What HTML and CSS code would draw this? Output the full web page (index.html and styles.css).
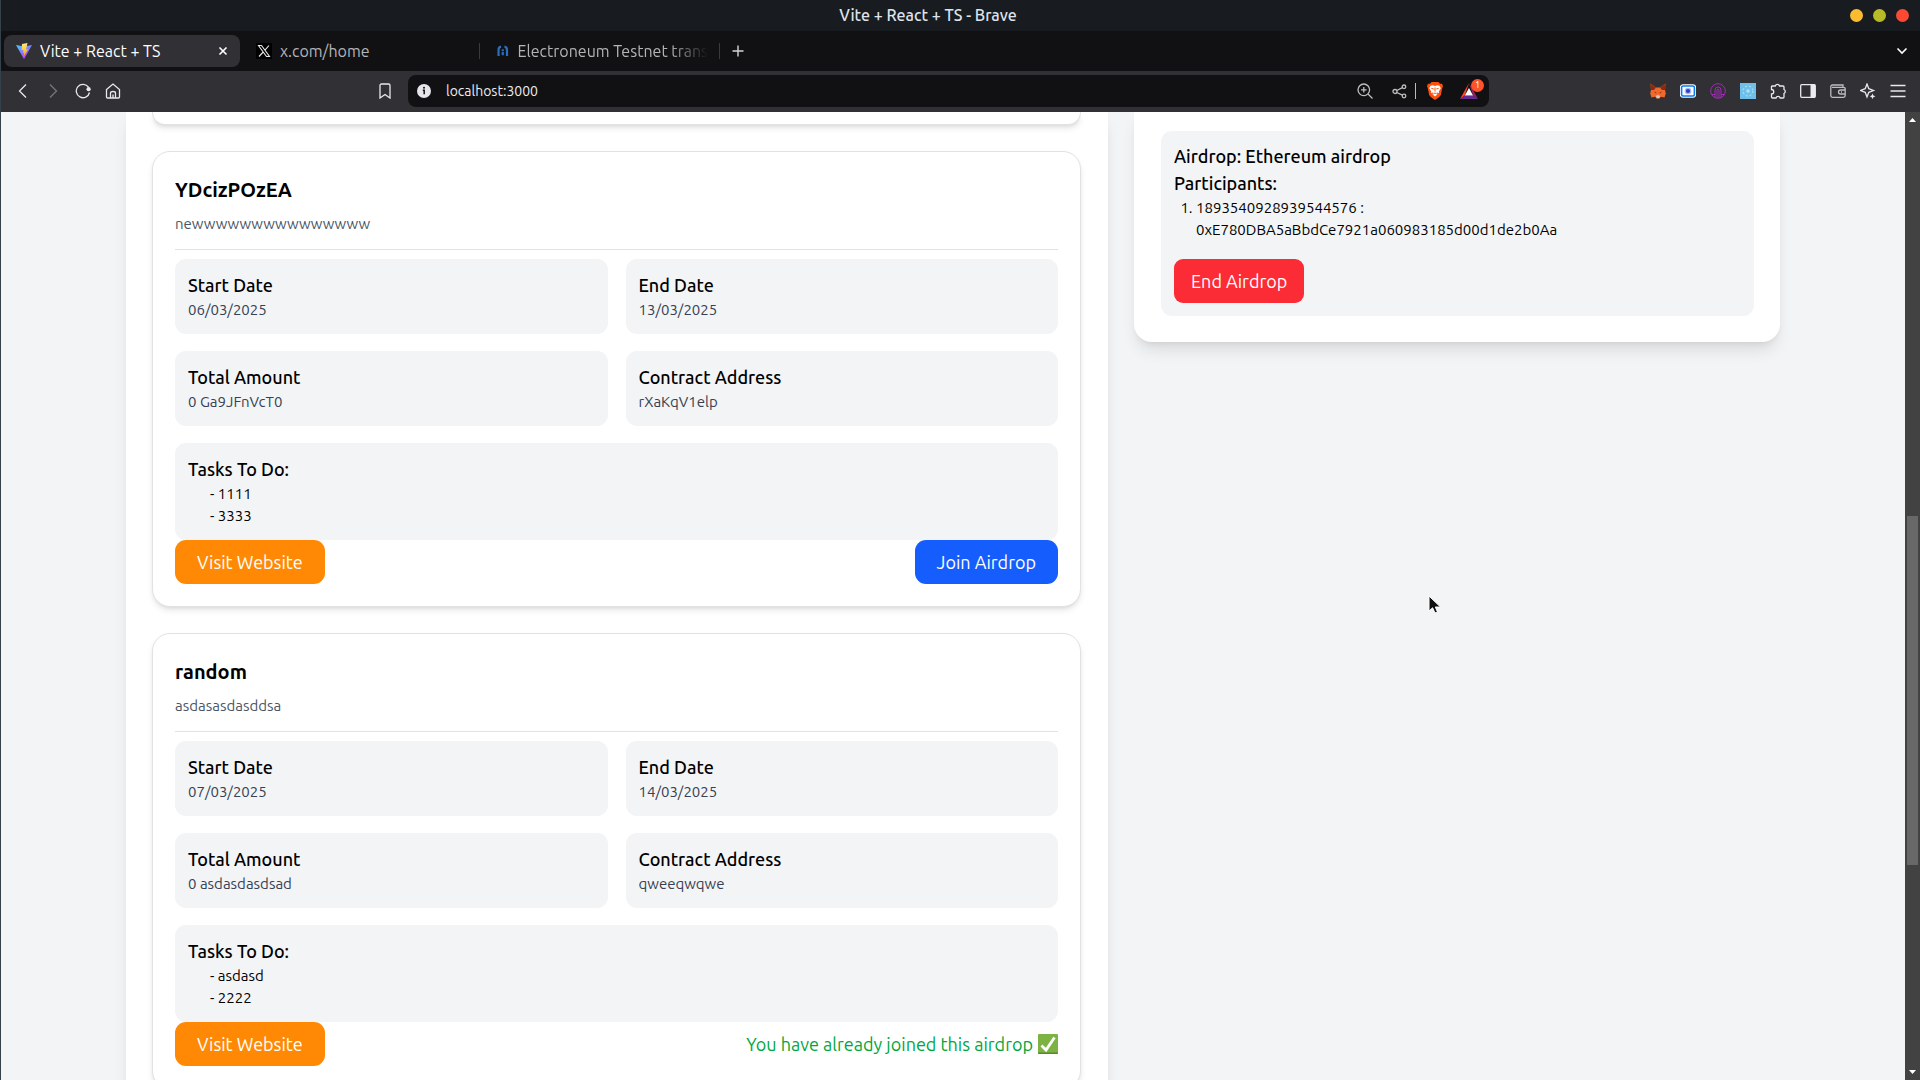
FILE: index.html
```
<!DOCTYPE html>
<html lang="en">
<head>
  <meta charset="UTF-8" />
  <meta name="viewport" content="width=device-width, initial-scale=1.0"/>
  <title>Vite + React + TS</title>
  <link rel="stylesheet" href="styles.css">
</head>
<body>
  <header class="titlebar">
    <span class="window-title">Vite + React + TS - Brave</span>
    <div class="window-buttons">
      <button class="dot yellow" aria-label="Minimize"></button>
      <button class="dot green" aria-label="Maximize"></button>
      <button class="dot red" aria-label="Close"></button>
    </div>
  </header>

  <nav class="tabs">
    <div class="tab active">
      <svg width="16" height="16" viewBox="0 0 16 16">
        <defs>
          <linearGradient id="viteBlue" x1="0" y1="0" x2="0.6" y2="1"><stop offset="0" stop-color="#41d1ff"/><stop offset="1" stop-color="#bd34fe"/></linearGradient>
          <linearGradient id="viteBolt" x1="0" y1="0" x2="0" y2="1"><stop offset="0" stop-color="#ffea83"/><stop offset="1" stop-color="#ffa800"/></linearGradient>
        </defs>
        <path d="M0 2 8 3.400 16 2 8.300 15.700Q8 16 7.700 15.700Z" fill="url(#viteBlue)"/>
        <path d="M11.500 0 6 1.100 5.500 7.200 7.500 6.900 7 10 8.300 9.600 7.600 13.500 12 6.200 10 6.500Z" fill="url(#viteBolt)"/>
      </svg>
      <span class="tab-text">Vite + React + TS</span>
      <button class="close-btn" aria-label="Close tab">
        <svg width="10" height="10" viewBox="0 0 10 10" stroke="#fff" stroke-width="1.600"><path d="M1.500 1.500 8.500 8.500M8.500 1.500 1.500 8.500"/></svg>
      </button>
    </div>
    <div class="tab">
      <svg width="16" height="16" viewBox="0 0 16 16">
        <path d="M0 0H16V16H0Z" fill="#000"/>
        <path d="M2.500 2.500H5.500L13.500 13.500H10.500ZM13 2.500 8.700 7.400M7.200 9 3 13.500" fill="none" stroke="#e8e8e8" stroke-width="1.100"/>
      </svg>
      <span class="tab-text">x.com/home</span>
    </div>
    <div class="tab">
      <svg width="16" height="16" viewBox="0 0 16 16" fill="none" stroke="#2a6fbd" stroke-width="2.600">
        <path d="M6 2.800Q2.800 3.200 3 7V14M10 2.800Q13.200 3.200 13 7V14M8 6V8M8 9V13"/>
      </svg>
      <span class="tab-text fade">Electroneum Testnet trans</span>
    </div>
    <button class="new-tab" aria-label="New tab">
      <svg width="12" height="12" viewBox="0 0 12 12" stroke="#d5d5d8" stroke-width="1.400"><path d="M6 0.500V11.500M0.500 6H11.500"/></svg>
    </button>
    <button class="tool-btn tab-list" aria-label="Search tabs">
      <svg width="12" height="8" viewBox="0 0 12 8" fill="none" stroke="#fff" stroke-width="1.600"><path d="M1.500 1.500 6 6 10.500 1.500"/></svg>
    </button>
  </nav>

  <div class="toolbar">
    <button class="tool-btn" aria-label="Back"><svg viewBox="0 0 16 16"><path d="M11 1.500 4.500 8 11 14.500"/></svg></button>
    <button class="tool-btn dim" aria-label="Forward"><svg viewBox="0 0 16 16"><path d="M5 1.500 11.500 8 5 14.500"/></svg></button>
    <button class="tool-btn" aria-label="Reload"><svg viewBox="0 0 16 16"><path d="M14.500 9.500A6.700 6.700 0 1 1 13.500 4.200"/><circle cx="13.600" cy="6.200" r="2.100" fill="#e9e9ec" stroke="none"/></svg></button>
    <button class="tool-btn" aria-label="Home"><svg viewBox="0 0 16 16"><path d="M1.500 6.500 8 1 14.500 6.500V14Q14.500 15 13.500 15H2.500Q1.500 15 1.500 14ZM5.500 15V10Q5.500 8.500 8 8.500T10.500 10V15M8 11.500V15"/></svg></button>
    <button class="tool-btn bookmark" aria-label="Bookmark"><svg viewBox="0 0 16 16"><path d="M3 2.500Q3 1 4.500 1H11.500Q13 1 13 2.500V15L8 11.500 3 15Z"/></svg></button>

    <div class="url-bar">
      <svg width="14" height="14" viewBox="0 0 14 14"><circle cx="7" cy="7" r="7" fill="#e6e6ea"/><circle cx="7" cy="3.800" r="1" fill="#111"/><path d="M5.800 6.200H7.200V10.300" fill="none" stroke="#111" stroke-width="1.500"/></svg>
      <input class="url-input" type="text" value="localhost:3000" aria-label="Address">
      <button class="tool-btn light" aria-label="Zoom"><svg viewBox="0 0 16 16"><circle cx="6.800" cy="6.800" r="5.800"/><path d="M11 11 15.500 15.500M6.800 4V9.600M4 6.800H9.600"/></svg></button>
      <button class="tool-btn light share" aria-label="Share"><svg viewBox="0 0 16 16"><circle cx="4" cy="8.500" r="2"/><circle cx="13" cy="3.800" r="1.800"/><circle cx="13" cy="13" r="1.800"/><path d="M5.800 7.500 11.400 4.700M5.800 9.500 11.400 12.200"/></svg></button>
      <button class="tool-btn shields" aria-label="Brave Shields">
        <svg class="brave" viewBox="0 0 16 18"><path d="M4.500 0H11.500L13 1.800 15 1.700 16 4 15.300 6 13.800 13Q13 15 8 18 3 15 2.200 13L0.700 6 0 4 1 1.700 3 1.800Z" fill="#ff4e0a" stroke="none"/><path d="M3.500 3.800 5.800 3.300 8 4 10.200 3.300 12.500 3.800 13.800 6.200 11.800 9.500 12 11.200 9.600 10.200 10.500 12.300 8 14.500 5.500 12.300 6.400 10.200 4 11.200 4.200 9.500 2.200 6.200Z" fill="#fff" stroke="none"/><path d="M4.300 6.300 6.700 7M11.700 6.300 9.300 7M8 5.500V9.500M6.300 12 8 11 9.700 12" stroke="#ff4e0a" stroke-width="1"/></svg>
      </button>
      <button class="tool-btn rewards" aria-label="Brave Rewards">
        <svg class="bat" viewBox="0 0 18 16"><path d="M9 0 4.800 12.500 0 16Z" fill="#ff4724" stroke="none"/><path d="M9 0 18 16 13 12.500Z" fill="#9e1f63" stroke="none"/><path d="M0 16 4.800 12.500H13L18 16Z" fill="#662d91" stroke="none"/><path d="M9 5 13 12.500H4.800Z" fill="#fff" stroke="none"/></svg>
        <span class="badge">1</span>
      </button>
    </div>

    <button class="tool-btn" aria-label="MetaMask"><svg viewBox="0 0 16 16"><g stroke="none"><path d="M0.500 0.500 6 4.500H10L15.500 0.500 15 7 15.800 10.500 14.500 14.500 11 13.700 9.300 15.500H6.700L5 13.700 1.500 14.500 0.200 10.500 1 7Z" fill="#f0692c"/><path d="M0.500 0.500 6 4.500 4 7 1 7ZM15.500 0.500 10 4.500 12 7 15 7Z" fill="#8a2b0e"/><path d="M4 8.500 6.500 9.700 6 10.500ZM12 8.500 9.500 9.700 10 10.500Z" fill="#5c1d10"/><path d="M6 13 7 12.200H9L10 13 9.300 15.200H6.700Z" fill="#d8c7c0"/></g></svg></button>
    <button class="tool-btn" aria-label="Recorder"><svg viewBox="0 0 16 16"><rect x="0.500" y="2" width="15" height="12" rx="2.500" fill="#fff" stroke="#fff"/><rect x="1.600" y="3" width="12.800" height="10" rx="1.500" stroke="#087bf4" stroke-width="1.600"/><circle cx="8" cy="8" r="2.700" fill="#273fc0" stroke="#aab9f4"/></svg></button>
    <button class="tool-btn" aria-label="Wallet extension"><svg viewBox="0 0 16 16"><g stroke="#a02bb5" stroke-width="1"><circle cx="8" cy="8" r="7.300"/><path d="M5 15V7Q5 4 8 4T11 7V15M7 15V7Q7 6 8 6T9 7V15M1.500 11.500H5M11 11.500H14.500"/></g></svg></button>
    <button class="tool-btn" aria-label="Extension"><svg viewBox="0 0 16 16"><path d="M0 0H16V16H0Z" fill="#70bfea" stroke="none"/><circle cx="8" cy="8" r="5" stroke="#b4ebf2" stroke-width="1" stroke-dasharray="2 2"/><circle cx="8" cy="8" r="1.800" fill="#a9e4ef" stroke="none"/></svg></button>
    <button class="tool-btn" aria-label="Extensions"><svg viewBox="0 0 16 16"><path d="M2 3H5.300A2.200 2.200 0 0 1 9.500 3H13Q14 3 14 4V6.500A2.200 2.200 0 0 1 14 10.500V14Q14 15 13 15H10.200A2.200 2.200 0 0 0 6 15H2.500Q1.500 15 1.500 14V11A2.200 2.200 0 0 0 1.500 6.500V3.500Z"/></svg></button>
    <button class="tool-btn" aria-label="Sidebar"><svg viewBox="0 0 16 16"><rect x="0.700" y="1.700" width="14.600" height="12.600" rx="1"/><path d="M10.500 1.500H15V14.500H10.500Z" fill="#ececef" stroke="none"/></svg></button>
    <button class="tool-btn light" aria-label="Wallet"><svg viewBox="0 0 16 16"><path d="M13 4V2H2.500Q0.800 2 0.800 3.500V12.500Q0.800 14.300 2.500 14.300H13.500Q15.200 14.300 15.200 12.500V6Q15.200 4.300 13.500 4.300H2M15 7H10.500Q8.500 7 8.500 9T10.500 11H15M11 9H12"/></svg></button>
    <button class="tool-btn" aria-label="Leo AI"><svg viewBox="0 0 16 16"><path d="M7 1 8.800 5.700 13.500 7.500 8.800 9.300 7 14 5.200 9.300 0.500 7.500 5.200 5.700Z"/><path d="M12.500 10.500 13.400 12.400 15.500 13.300 13.400 14.200 12.500 16 11.600 14.200 9.700 13.300 11.600 12.400Z" fill="#e9e9ec" stroke="none"/></svg></button>
    <button class="tool-btn" aria-label="Menu"><svg viewBox="0 0 16 16"><path d="M0.500 2.500H15.500M0.500 8H15.500M0.500 13.500H15.500"/></svg></button>
  </div>

  <div class="viewport">
    <main class="page">
      <div class="container">
        <section class="panel airdrops">
          <div class="card-end"></div>

          <article class="card">
            <h2>YDcizPOzEA</h2>
            <p class="description">newwwwwwwwwwwwwww</p>
            <hr>
            <div class="info-grid">
              <div class="info"><h3>Start Date</h3><p>06/03/2025</p></div>
              <div class="info"><h3>End Date</h3><p>13/03/2025</p></div>
              <div class="info"><h3>Total Amount</h3><p>0 Ga9JFnVcT0</p></div>
              <div class="info"><h3>Contract Address</h3><p>rXaKqV1elp</p></div>
              <div class="info tasks">
                <h3>Tasks To Do:</h3>
                <ul>
                  <li>- 1111</li>
                  <li>- 3333</li>
                </ul>
              </div>
            </div>
            <div class="actions">
              <button class="btn visit-btn">Visit Website</button>
              <button class="btn join-btn">Join Airdrop</button>
            </div>
          </article>

          <article class="card">
            <h2>random</h2>
            <p class="description">asdasasdasddsa</p>
            <hr>
            <div class="info-grid">
              <div class="info"><h3>Start Date</h3><p>07/03/2025</p></div>
              <div class="info"><h3>End Date</h3><p>14/03/2025</p></div>
              <div class="info"><h3>Total Amount</h3><p>0 asdasdasdsad</p></div>
              <div class="info"><h3>Contract Address</h3><p>qweeqwqwe</p></div>
              <div class="info tasks">
                <h3>Tasks To Do:</h3>
                <ul>
                  <li>- asdasd</li>
                  <li>- 2222</li>
                </ul>
              </div>
            </div>
            <div class="actions">
              <button class="btn visit-btn">Visit Website</button>
              <p class="joined">You have already joined this airdrop
                <svg width="20" height="20" viewBox="0 0 20 20"><rect width="20" height="20" rx="1" fill="#7cb342"/><path d="M0 18.500H20V19Q20 20 19 20H1Q0 20 0 19Z" fill="#558b2f"/><path d="M3.500 11.500 8 16 16.500 3.500" fill="none" stroke="#fff" stroke-width="2.800"/></svg>
              </p>
            </div>
          </article>
        </section>

        <aside class="panel manage">
          <div class="info">
            <h3>Airdrop: Ethereum airdrop</h3>
            <h3>Participants:</h3>
            <ol>
              <li>1893540928939544576 :<br>0xE780DBA5aBbdCe7921a060983185d00d1de2b0Aa</li>
            </ol>
            <button class="btn end-btn">End Airdrop</button>
          </div>
        </aside>
      </div>
    </main>

    <div class="scrollbar">
      <svg width="15" height="17" viewBox="0 0 15 17"><path d="M4 10H11L7.500 6Z" fill="#fff"/></svg>
      <div class="track-above"></div>
      <div class="thumb"></div>
      <div class="track-below"></div>
      <svg width="15" height="17" viewBox="0 0 15 17"><path d="M4 7H11L7.500 11Z" fill="#fff"/></svg>
    </div>
  </div>

  <svg class="cursor" width="14" height="20" viewBox="0 0 14 20"><path d="M1 1V16L4.600 12.800 7 18 9.500 17 7.300 12H12.500Z" fill="#111" stroke="#fff" stroke-width="1"/></svg>
</body>
</html>
```
FILE: styles.css
```
* {
  box-sizing: border-box;
}
body {
  font-family: "Ubuntu", "Open Sans", "Noto Sans", sans-serif;
  margin: 0;
  height: 100vh;
  overflow: hidden;
  display: flex;
  flex-direction: column;
  border-left: 1px solid #34404a;
  background: #f3f4f6;
  color: #000;
}
h2, h3, p, ul, ol {
  margin: 0;
  padding: 0;
}
button {
  font-family: inherit;
  border: none;
  padding: 0;
  background: none;
  cursor: pointer;
}

/* browser window */
.titlebar {
  display: flex;
  align-items: center;
  height: 31px;
  padding: 0 11px 1px 5px;
  background: #181b1f;
}
.window-title {
  flex: 1;
  text-align: center;
  font-size: 16px;
  font-weight: 500;
  color: #dfe3ec;
}
.window-buttons {
  display: flex;
  gap: 10px;
}
.dot {
  width: 13px;
  height: 13px;
  border-radius: 50%;
}
.yellow { background: #fdbc2e; }
.green { background: #b8bb26; }
.red { background: #fb4934; }

.tabs {
  display: flex;
  align-items: center;
  height: 40px;
  padding: 0 3px;
  background: #111113;
}
.tab {
  display: flex;
  align-items: center;
  gap: 8px;
  width: 240px;
  height: 32px;
  padding: 0 12px 0 16px;
  font-size: 16px;
  line-height: 18px;
  color: #b4b4b8;
  position: relative;
}
.tab.active {
  width: 236px;
  padding: 0 10px 0 12px;
  border-radius: 8px;
  background: #313035;
  color: #fff;
}
.tab:not(.active)::after {
  content: "";
  position: absolute;
  right: 0;
  width: 1px;
  height: 16px;
  background: #3b3b3f;
}
.tab-text {
  flex: 1;
  white-space: nowrap;
}
.fade {
  -webkit-mask-image: linear-gradient(to right, #000 80%, transparent);
  mask-image: linear-gradient(to right, #000 80%, transparent);
}
.close-btn {
  display: flex;
  padding: 2px;
}
.new-tab {
  display: flex;
  padding: 12px;
}
.tab-list {
  margin-left: auto;
}

.toolbar {
  display: flex;
  align-items: center;
  height: 41px;
  padding: 0 7px 1px;
  background: #313035;
}
.tool-btn {
  display: flex;
  align-items: center;
  justify-content: center;
  width: 30px;
  height: 30px;
  flex-shrink: 0;
}
.toolbar .tool-btn svg {
  width: 16px;
  height: 16px;
  fill: none;
  stroke: #e9e9ec;
  stroke-width: 1.3px;
}
.toolbar .tool-btn.dim svg {
  stroke: #77767b;
}
.toolbar .tool-btn.light svg {
  stroke: #bdbdc1;
}
.bookmark {
  margin-left: 242px;
}
.url-bar {
  display: flex;
  align-items: center;
  flex: 1;
  height: 32px;
  margin: 0 154px 0 8px;
  padding: 0 5px 0 9px;
  border-radius: 8px;
  background: #111113;
}
.url-input {
  flex: 1;
  height: 24px;
  margin-left: 15px;
  padding: 0;
  border: none;
  outline: none;
  background: none;
  font-family: inherit;
  font-size: 14px;
  color: #ececef;
}
.share {
  width: 36px;
  padding-left: 2px;
  border-right: 1px solid #b9b9bd;
  height: 16px;
}
.shields {
  width: 38px;
}
.toolbar .tool-btn .brave {
  height: 18px;
}
.toolbar .tool-btn .bat {
  width: 18px;
}
.rewards {
  position: relative;
}
.badge {
  position: absolute;
  top: 3px;
  right: 0;
  width: 13px;
  height: 13px;
  border-radius: 50%;
  background: #fb542b;
  color: #fff;
  font-size: 9px;
  line-height: 13px;
}

/* page */
.viewport {
  display: flex;
  flex: 1;
  min-height: 0;
}
.page {
  flex: 1;
  overflow: hidden;
}
.container {
  display: grid;
  grid-template-columns: repeat(5, 1fr);
  align-items: start;
  gap: 26px;
  max-width: 1654px;
  margin: 0 auto;
}
.panel {
  background: #fff;
  box-shadow: 0 11px 16px -3px rgba(0,0,0,0.1), 0 4px 7px -4px rgba(0,0,0,0.1);
  border-radius: 0 0 18px 18px;
  padding: 0 27px 26px 26px;
}
.airdrops {
  grid-column: span 3;
  display: flex;
  flex-direction: column;
  gap: 26px;
}
.manage {
  grid-column: span 2;
  padding: 19px 26px 26px 27px;
}
.card, .card-end {
  border: 1px solid #e1e2e4;
  border-radius: 18px;
  padding: 22px;
  background: #fff;
  box-shadow: 0 4px 7px -1px rgba(0,0,0,0.1), 0 2px 4px -2px rgba(0,0,0,0.1);
}
/* bottom of the card scrolled out of view */
.card-end {
  height: 13px;
  padding: 0;
  border-top: none;
  border-radius: 0 0 18px 18px;
}
h2 {
  font-size: 20px;
  line-height: 31px;
  font-weight: 700;
}
.description {
  margin-top: 8px;
  font-size: 15px;
  line-height: 22px;
  color: #4a5565;
}
hr {
  margin: 14px 0 9px;
  border: none;
  border-top: 1px solid #e1e2e4;
}
.info-grid {
  display: grid;
  grid-template-columns: 1fr 1fr;
  gap: 17px 18px;
}
.info {
  padding: 13px;
  border-radius: 11px;
  background: #f3f4f6;
  font-size: 15px;
  line-height: 22px;
}
.info h3 {
  font-size: 18px;
  line-height: 27px;
  font-weight: 500;
}
.info p {
  color: #364153;
}
.tasks {
  grid-column: span 2;
}
.tasks ul {
  padding-left: 22px;
  list-style: none;
}
.manage .info {
  padding-top: 12px;
}
.info ol {
  padding-left: 22px;
  margin-bottom: 18px;
}
.actions {
  display: flex;
  justify-content: space-between;
  align-items: center;
}
.btn {
  padding: 0 22px;
  border-radius: 11px;
  font-size: 18px;
  line-height: 44px;
  color: #fff;
}
.visit-btn {
  background: #ff8904;
}
.join-btn {
  background: #155dfc;
}
.end-btn {
  display: block;
  padding: 0 17px;
  border-radius: 9px;
  background: #fb2c36;
}
.joined {
  display: flex;
  align-items: center;
  gap: 5px;
  font-size: 18px;
  color: #00a63e;
}

.scrollbar {
  display: flex;
  flex-direction: column;
  width: 15px;
  background: #424242;
}
.track-above {
  flex: 387;
}
.thumb {
  flex: 349;
  margin: 0 2px;
  background: #686868;
}
.track-below {
  flex: 198;
}
.cursor {
  position: absolute;
  left: 1428px;
  top: 595px;
}
```
